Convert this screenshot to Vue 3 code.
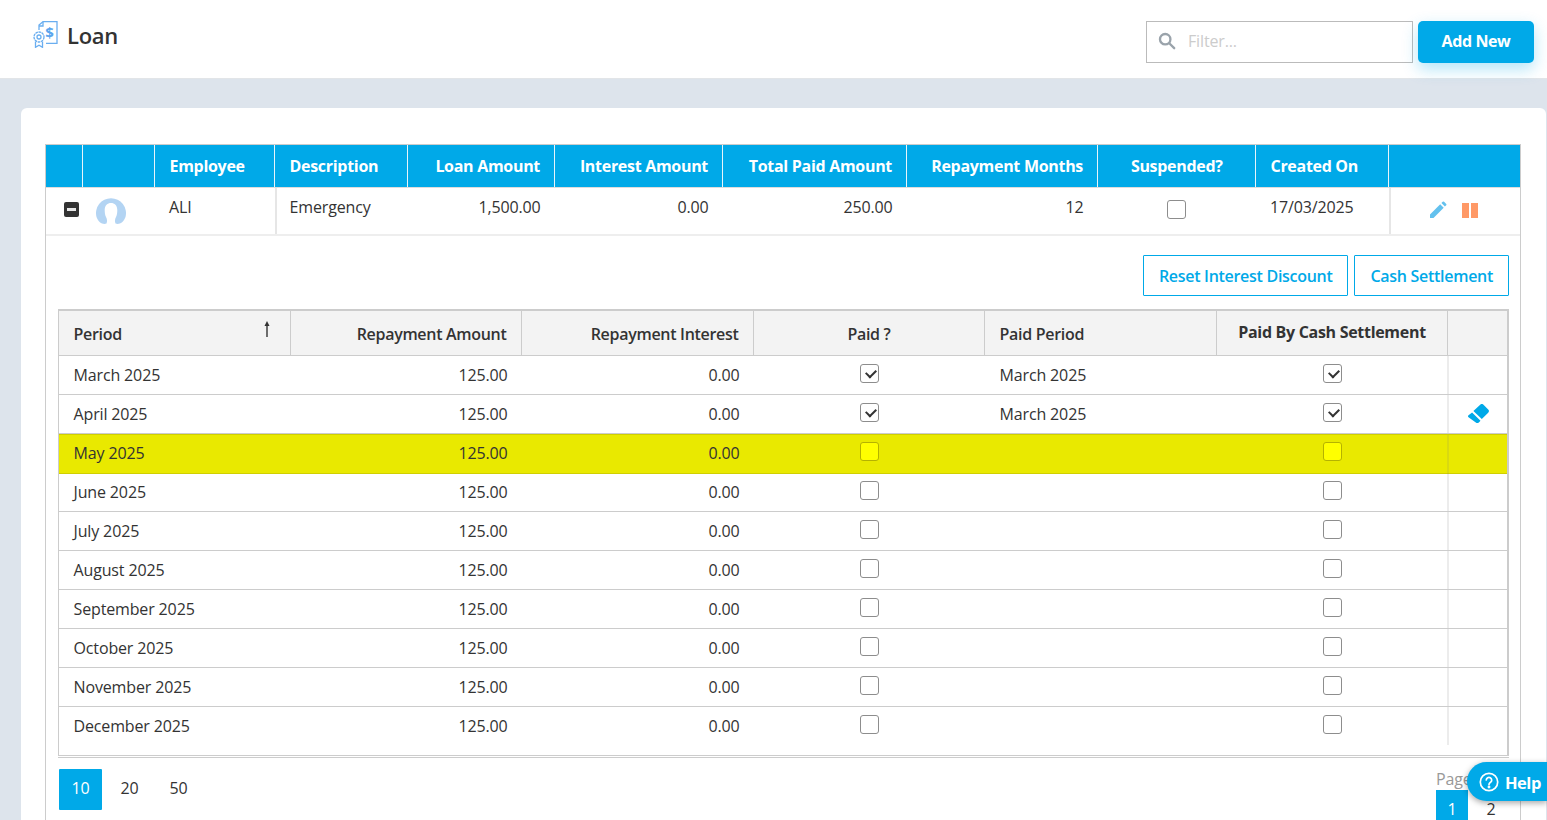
<script setup>
const outerCols = [
  { label: '', w: 37 }, { label: '', w: 72 },
  { label: 'Employee', w: 120 }, { label: 'Description', w: 133 },
  { label: 'Loan Amount', w: 147, cls: 'right' }, { label: 'Interest Amount', w: 168, cls: 'right' },
  { label: 'Total Paid Amount', w: 184, cls: 'right' }, { label: 'Repayment Months', w: 191, cls: 'right' },
  { label: 'Suspended?', w: 158, cls: 'center' }, { label: 'Created On', w: 133 }, { label: '', w: 131 }
]
const innerCols = [
  { label: 'Period', w: 232 }, { label: 'Repayment Amount', w: 231, cls: 'right' },
  { label: 'Repayment Interest', w: 232, cls: 'right' }, { label: 'Paid ?', w: 231, cls: 'center' },
  { label: 'Paid Period', w: 232 }, { label: 'Paid By Cash Settlement', w: 231, cls: 'center strong' },
  { label: '', w: 61 }
]
const rows = ['March', 'April', 'May', 'June', 'July', 'August', 'September', 'October', 'November', 'December'].map((m, i) => ({
  period: `${m} 2025`,
  paid: i < 2,
  paidPeriod: i < 2 ? 'March 2025' : '',
  eraser: i === 1,
  active: i === 2
}))
</script>

<template>
  <div class="page">
    <header class="top">
      <div class="title">
        <svg class="logo" viewBox="0 0 26 27" width="26" height="27" fill="none" stroke="#6aaef0" stroke-width="1.300">
          <path d="M6 9V4L10 .7h14v21.600H13" />
          <path d="M10 .7V5H6" />
          <text x="16.500" y="17" font-size="15" font-weight="700" fill="#5aa5ee" stroke="none" text-anchor="middle" font-family="Open Sans, sans-serif">$</text>
          <circle cx="6" cy="16" r="5" stroke-dasharray="2.600 .6" />
          <circle cx="6" cy="16" r="2" />
          <path d="M2.500 20.500V26.300l3.500-2 3.500 2V20.500" />
        </svg>
        <h1>Loan</h1>
      </div>
      <div class="actions">
        <label class="filter">
          <svg viewBox="0 0 20 20" width="18" height="18" fill="none" stroke="#9aa3ab" stroke-width="2.600">
            <circle cx="8" cy="8" r="5.800" />
            <path d="M12.500 12.500 18 18" stroke-linecap="round" />
          </svg>
          <span>Filter...</span>
        </label>
        <button class="add">Add New</button>
      </div>
    </header>

    <main class="card">
      <div class="outer">
        <div class="thead">
          <div v-for="(c, i) in outerCols" :key="i" class="th" :class="c.cls" :style="{ width: c.w + 'px' }">{{ c.label }}</div>
        </div>
        <div class="master">
          <div class="td" style="width: 37px"><span class="minus"></span></div>
          <div class="td" style="width: 72px">
            <svg class="avatar" viewBox="0 0 30 27" width="30" height="27">
              <path fill="#b3d4f3" d="M10.500 25.500C7 27 2.500 24.500 .5 19A15 15 0 1 1 29.500 19C27.500 24.500 23 27 19.500 25.500C18.500 23 19 21 20 19C21 17 21.300 14.500 21.300 12C21.300 7.500 18.500 5 15 5C11.500 5 8.700 7.500 8.700 12C8.700 14.500 9 17 10 19C11 21 11.500 23 10.500 25.500Z" />
            </svg>
          </div>
          <div class="td text" style="width: 120px">ALI</div>
          <div class="td text sep" style="width: 133px">Emergency</div>
          <div class="td text right" style="width: 147px">1,500.00</div>
          <div class="td text right" style="width: 168px">0.00</div>
          <div class="td text right" style="width: 184px">250.00</div>
          <div class="td text right" style="width: 191px">12</div>
          <div class="td center" style="width: 158px"><span class="box suspended"></span></div>
          <div class="td text" style="width: 133px">17/03/2025</div>
          <div class="td tools sep" style="width: 131px">
            <svg viewBox="0 0 18 18" width="18" height="18">
              <path fill="#63c1ee" d="M1 13.500 11.200 3.300l3.500 3.500L4.500 17H1zM12.400 2.100l1.300-1.300a1 1 0 0 1 1.400 0l2.100 2.100a1 1 0 0 1 0 1.400l-1.300 1.300z" />
            </svg>
            <span class="pause"><i></i><i></i></span>
          </div>
        </div>

        <div class="detail">
          <div class="detail-actions">
            <button class="ghost">Reset Interest Discount</button>
            <button class="ghost">Cash Settlement</button>
          </div>
          <div class="inner">
            <div class="ihead">
              <div v-for="(c, i) in innerCols" :key="i" class="ith" :class="c.cls" :style="{ width: c.w + 'px' }">
                {{ c.label }}
                <svg v-if="i === 0" class="sort" viewBox="0 0 10 18" width="10" height="18">
                  <path d="M5 17V3" stroke="#333" stroke-width="1.400" />
                  <path d="M5 1 2.500 6h5z" fill="#333" />
                </svg>
              </div>
            </div>
            <div class="ibody">
              <div v-for="r in rows" :key="r.period" class="irow" :class="{ active: r.active }">
                <div class="itd start" style="width: 232px">{{ r.period }}</div>
                <div class="itd right" style="width: 231px">125.00</div>
                <div class="itd right" style="width: 232px">0.00</div>
                <div class="itd center" style="width: 231px"><span class="box" :class="{ on: r.paid }"></span></div>
                <div class="itd start" style="width: 232px">{{ r.paidPeriod }}</div>
                <div class="itd center" style="width: 231px"><span class="box" :class="{ on: r.paid }"></span></div>
                <div class="itd last" style="width: 61px">
                  <svg v-if="r.eraser" viewBox="0 0 22 20" width="22" height="20">
                    <path fill="#00a9e8" d="M13.200.700a2.400 2.400 0 0 1 3.300 0l4.700 4.700a2.400 2.400 0 0 1 0 3.300l-6.400 6.400L6.400 7.100zM5.100 8.400l8.400 8.300-1.700 1.800a2.400 2.400 0 0 1-3 0l-7.300-5.200a1.500 1.500 0 0 1 0-2.100z" />
                  </svg>
                </div>
              </div>
            </div>
          </div>
          <div class="pager">
            <div class="sizes">
              <span class="size current">10</span>
              <span class="size">20</span>
              <span class="size">50</span>
            </div>
            <div class="pages">
              <div class="page-label">Page</div>
              <div class="page-links">
                <span class="pg current">1</span>
                <span class="pg">2</span>
              </div>
            </div>
          </div>
        </div>
      </div>
    </main>

    <button class="help">
      <svg viewBox="0 0 20 20" width="20" height="20" fill="none" stroke="#fff" stroke-width="1.700">
        <circle cx="10" cy="10" r="8.700" />
        <path d="M7.300 8a2.700 2.700 0 1 1 4.200 2.300c-1 .7-1.500 1.100-1.500 2.200" stroke-linecap="round" />
        <circle cx="10" cy="15" r=".6" fill="#fff" />
      </svg>
      Help
    </button>
  </div>
</template>

<style>
html, body { margin: 0; overflow: hidden; }
</style>

<style scoped>
* { box-sizing: border-box; }
.page {
  position: relative;
  width: 1547px;
  height: 820px;
  overflow: hidden;
  background: #dde4ec;
  font-family: "Open Sans", sans-serif;
  font-size: 16px;
  letter-spacing: -0.14px;
  color: #333;
}
.top {
  height: 79px;
  background: #fff;
  border-bottom: 1px solid #e2e5e8;
  display: flex;
  justify-content: space-between;
  padding: 21px 13px 0 33px;
}
.title { display: flex; align-items: flex-start; gap: 8px; }
h1 { margin: -1px 0 0; font-size: 22px; font-weight: 600; line-height: 30px; color: #333; letter-spacing: -0.3px; }
.actions { display: flex; gap: 5px; height: 42px; }
.filter {
  width: 267px;
  display: flex;
  align-items: center;
  gap: 12px;
  padding: 0 0 2px 11px;
  border: 1px solid #bbb;
  color: #ccc;
  font-size: 16px;
}
.add {
  width: 116px;
  padding: 0 0 2px;
  border: 0;
  border-radius: 5px;
  background: #00a9e8;
  color: #fff;
  font: 700 16px "Open Sans", sans-serif;
  letter-spacing: -0.4px;
  box-shadow: 0 6px 16px rgba(0, 169, 232, .3);
}
.card {
  margin: 29px 1px 0 21px;
  height: 800px;
  padding: 36px 26px 0 24px;
  background: #fff;
  border-radius: 6px;
}
.outer {
  width: 1476px;
  height: 760px;
  border-left: 1px solid #ccc;
  border-right: 1px solid #ccc;
  border-top: 1px solid #ccc;
}
.thead { display: flex; height: 43px; background: #00a9e8; border-bottom: 1px solid #ddd; }
.th {
  display: flex;
  align-items: center;
  padding: 0 14px 0 14.500px;
  flex: none;
  color: #fff;
  font-weight: 700;
  font-size: 16px;
  letter-spacing: -0.3px;
  border-right: 1px solid #e8f4fb;
  white-space: nowrap;
}
.th:last-child { border-right: 0; }
.right { justify-content: flex-end; text-align: right; }
.center { justify-content: center; text-align: center; }
.master { display: flex; height: 48px; border-bottom: 2px solid #eee; }
.td { flex: none; display: flex; align-items: center; justify-content: center; height: 46px; }
.td.text { justify-content: flex-start; align-items: flex-start; padding: 8px 14px 0; }
.td.text.sep { padding-left: 12.500px; }
.td.text.right { justify-content: flex-end; padding-right: 14.500px; }
.sep { border-left: 2px solid #e6e6e6; }
.td.tools { gap: 15px; padding: 0 5px 2px 0; }
.minus {
  width: 15px; height: 15px;
  border-radius: 2px;
  background: #333;
  position: relative;
  margin-left: 13px;
  margin-top: -4px;
}
.minus::after {
  content: "";
  position: absolute;
  left: 3px; right: 3px; top: 6px;
  height: 3px;
  background: #e8e8e8;
}
.avatar { margin: 0 14px 0 -2px; }
.box {
  display: inline-block;
  position: relative;
  width: 19px; height: 19px;
  background: #fff;
  border: 1px solid #8d8d8d;
  border-radius: 3px;
}
.box.suspended { margin: -4px 2px 0 0; }
.box.on::after {
  content: "";
  position: absolute;
  left: 5px; top: 4px;
  width: 8px; height: 5px;
  border-left: 2px solid #333;
  border-bottom: 2px solid #333;
  transform: rotate(-45deg);
}
.pause { display: flex; gap: 2px; }
.pause i { display: block; width: 7px; height: 15px; background: #ff9966; }
.detail { padding: 19px 11px 0 12px; }
.detail-actions { display: flex; justify-content: flex-end; gap: 6px; height: 41px; }
.ghost {
  padding: 0 15px;
  background: #fff;
  border: 1px solid #00a9e8;
  border-radius: 1px;
  color: #00a9e8;
  font: 600 16px "Open Sans", sans-serif;
  letter-spacing: -0.29px;
}
.inner {
  margin-top: 13px;
  width: 1451px;
  border: 1px solid #ccc;
  border-top-width: 2px;
  border-right-width: 2px;
}
.ihead { display: flex; height: 45px; background: #f3f3f3; border-bottom: 1px solid #ccc; }
.ith {
  flex: none;
  display: flex;
  align-items: center;
  padding: 2px 14.500px 0;
  font-weight: 600;
  letter-spacing: -0.3px;
  position: relative;
  border-right: 1px solid #ccc;
}
.ith:last-child { border-right: 0; }
.ith.strong { font-weight: 700; padding-top: 0; padding-bottom: 2px; }
.sort { position: absolute; right: 18px; top: 9px; }
.ibody { height: 399px; }
.irow { display: flex; height: 39px; border-bottom: 1px solid #ccc; }
.irow:last-child { border-bottom-color: transparent; }
.irow.active {
  background: #e9e900;
  border-top: 1px solid #d0cf00;
  border-bottom: 1px solid #d0cf00;
  height: 40px;
  margin-bottom: -1px;
  padding-bottom: 2px;
}
.irow.active .box { background: #ff0; border-color: #b5b200; }
.itd { flex: none; display: flex; align-items: center; padding: 0 14.500px 0 14px; }
.itd.start { padding-left: 14.500px; }
.itd .box { margin-top: -3px; }
.itd.last {
  justify-content: center;
  padding: 0 2px 0 0;
  border-left: 2px solid rgba(120, 120, 120, .14);
  margin-left: -1px;
}
.irow.active .itd.last { margin-bottom: -2px; }
.pager {
  display: flex;
  justify-content: space-between;
  margin-top: 1px;
  padding: 11px 0 0 1px;
  border-top: 1px solid #ccc;
  width: 1451px;
}
.sizes { display: flex; }
.size { width: 43px; height: 41px; margin-right: 6px; padding-bottom: 3px; display: flex; align-items: center; justify-content: center; }
.size.current { background: #00a9e8; color: #fff; border-radius: 1px; }
.pages { width: 73px; margin-top: -2px; flex: none; }
.page-label { color: #999; height: 23px; line-height: 24px; }
.page-links { display: flex; }
.pg { flex: none; width: 32px; height: 40px; padding-top: 8px; text-align: center; }
.pg.current { background: #00a9e8; color: #fff; }
.pg:last-child { width: 46px; }
.help {
  position: absolute;
  right: 0; top: 762px;
  width: 80px; height: 39px;
  display: flex;
  align-items: center;
  gap: 6px;
  padding: 1px 0 0 12px;
  border: 0;
  border-radius: 20px 0 0 20px;
  background: #00a9e8;
  color: #fff;
  font: 700 16.500px "Open Sans", sans-serif;
  letter-spacing: -0.5px;
  box-shadow: 0 2px 6px rgba(0, 0, 0, .35);
}
</style>
